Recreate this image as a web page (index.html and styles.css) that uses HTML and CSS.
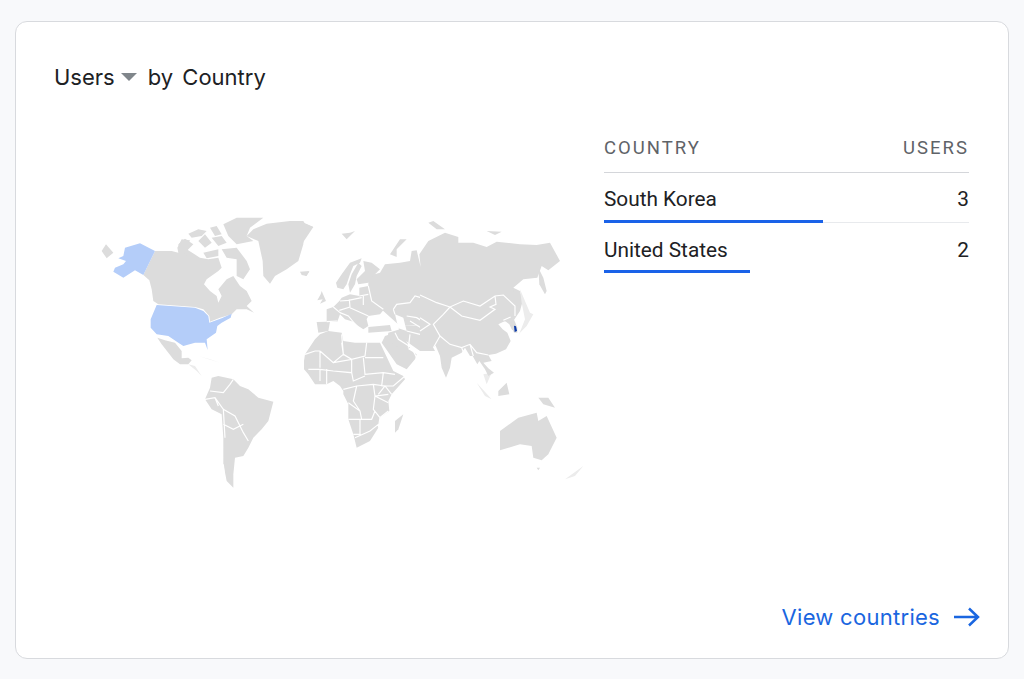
FILE: index.html
```html
<!DOCTYPE html>
<html lang="en">
<head>
<meta charset="utf-8">
<title>Users by Country</title>
<link rel="stylesheet" href="styles.css">
</head>
<body>
<main class="card">
  <h2 class="title"><span>Users</span><span class="caret"></span><span>by Country</span></h2>
  <div class="body">
    <svg class="map" viewBox="0 0 500 300" width="500" height="300" aria-label="World map">
      <!-- North America -->
      <g transform="scale(.33333)">
        <path class="land" d="M35 150L48 130L70 155L50 172Z"/>
        <path class="land" d="M195 150L245 150L265 155L262 140L275 115L300 118L290 145L330 170L355 175L385 170L395 200L385 210L350 235L342 250L360 270L380 285L385 305L395 285L385 265L410 235L430 225L450 255L470 270L485 300L470 315L492 335L470 325L440 325L425 340L390 350L360 362L358 345L340 325L315 318L205 310L190 300L185 265L178 238L160 222Z"/>
        <path class="land" d="M295 98L325 85L350 90L335 105L305 110ZM265 130L285 113L310 130L290 150L300 168L270 150ZM325 120L345 100L365 125L345 140ZM360 80L380 75L395 100L375 105ZM365 110L395 105L410 125L385 135ZM400 70L440 50L520 50L480 80L470 105L490 120L440 130L415 105ZM395 145L440 140L470 180L480 205L460 235L440 225L440 175L410 170ZM340 155L385 145L385 165L350 172ZM630 212L658 210L650 225L635 222Z"/>
        <path class="land" d="M490 85L530 68L600 60L640 60L645 68L670 78L640 95L640 130L625 180L590 205L555 225L540 248L520 225L518 180L505 120L470 105Z"/>
        <path class="us" d="M105 140L150 127L195 150L160 222L135 208L100 230L70 212L75 200L100 190L108 180L85 172L100 165Z"/>
      </g>
      <g transform="translate(50 100) scale(.33333)">
        <path class="us" d="M50 12L165 20L190 30L205 45L208 65L245 52L275 38L272 50L245 65L232 75L228 95L200 115L203 147L195 125L165 125L130 135L115 125L85 105L50 100L32 80L32 55Z"/>
        <path class="land" d="M52 110L75 118L105 125L125 150L125 172L145 170L155 178L145 190L120 190L100 175L85 155L65 130Z"/>
        <path class="pale" d="M145 190L165 195L185 225L170 210ZM175 165L240 185L210 175Z"/>
      </g>
      <!-- South America, islands, Australia -->
      <g transform="translate(100 140) scale(.33333)">
        <path class="land" d="M65 110L85 105L130 115L150 135L175 145L205 170L250 182L235 240L215 265L190 290L175 320L160 345L135 350L130 400L130 440L110 420L100 370L100 290L95 220L65 205L45 175L60 140Z"/>
        <path class="border" d="M60 150L100 155L120 130L130 115M45 175L75 170L100 205L135 225L160 275L175 300M100 250L130 265L160 250M100 205L105 290M75 170L85 195M100 370L105 420"/>
        <path class="pale" d="M860 125L905 175L885 165ZM1125 415L1180 375L1155 405ZM880 100L905 95L890 130Z"/>
        <path class="land" d="M925 150L950 125L958 160L925 165ZM1045 170L1075 170L1095 200L1060 190Z"/>
        <path class="land" d="M930 270L985 230L1040 215L1045 240L1070 225L1100 290L1075 340L1055 358L1030 350L1025 315L990 310L930 328Z"/>
        <path class="land" d="M1040 380L1050 380L1045 388Z"/>
      </g>
      <!-- Africa and Arabia -->
      <g transform="translate(210 130) scale(.33333)">
        <path class="land" d="M12 90L15 70L45 25L60 10L85 0L125 5L130 30L165 35L200 35L240 35L280 120L310 135L315 145L275 190L265 210L268 240L240 260L235 290L210 330L170 350L160 310L145 265L145 220L130 190L130 180L120 165L100 150L80 160L45 160L25 130L12 115Z"/>
        <path class="land" d="M310 250L295 295L285 305L285 270Z"/>
        <path class="land" d="M245 35L255 15L270 10L300 30L325 55L350 70L345 85L320 115L290 100Z"/>
        <path class="border" d="M60 60L100 95L130 70L125 10M45 60L60 60M15 70L45 60M125 35L130 70L155 85L195 75L200 35M195 80L250 80M190 80L195 130L250 125L285 130M100 95L155 85L155 125L100 120M155 125L160 150L195 135M100 120L150 125M25 115L60 115L100 120M60 115L60 150M80 115L80 160M60 60L60 110M130 175L170 165L220 160L255 165M170 165L160 210L180 240M220 160L225 195L265 190M225 195L220 235L240 260M145 215L180 240L185 265L145 265M145 265L180 265L180 310L160 310M180 265L215 265L225 240M165 320L210 300L235 280M250 125L245 165L280 165L315 135M235 190L255 165L275 190M225 195L265 215M265 240L240 260L235 290"/>
      </g>
      <!-- Russia and northern Asia -->
      <g transform="translate(210 10) scale(.33333)">
        <path class="land" d="M385 35L400 30L435 55L410 55ZM125 68L150 65L165 60L140 85ZM560 60L605 62L585 72ZM0 30L40 48L12 90L0 120ZM270 130L300 85L320 85L290 115L290 138Z"/>
        <path class="land" d="M205 195L240 185L255 160L300 155L330 150L335 120L350 118L362 168L358 130L385 90L435 65L475 78L475 95L520 95L560 108L590 92L660 100L710 102L750 95L780 150L745 178L725 165L712 200L670 205L640 230L660 240L668 270L660 300L640 330L450 340L300 345L250 300L215 280L190 275L205 250Z"/>
        <path class="land" d="M715 170L730 200L740 240L735 250L718 220Z"/>
        <path class="land" d="M295 345L340 345L440 330L420 390L400 410L405 420L360 420L325 395L300 375Z"/>
      </g>
      <!-- Europe -->
      <g transform="translate(210 50) scale(.33333)">
        <path class="land" d="M2 65L28 62L18 75ZM65 120L78 150L60 158L68 145L52 148L62 130Z"/>
        <path class="land" d="M108 95L125 70L150 35L185 22L180 35L160 45L150 70L140 100L130 115L112 110Z"/>
        <path class="land" d="M155 70L175 35L185 45L170 75L165 100L150 125L145 100Z"/>
        <path class="land" d="M190 30L215 35L240 55L220 75L205 95L175 100L170 85L195 60Z"/>
        <path class="land" d="M50 213L80 212L80 175L100 168L118 150L125 140L150 130L178 135L178 110L205 105L215 120L260 170L250 178L240 190L205 195L200 205L205 225L190 235L175 225L160 212L135 205L120 190L112 212L90 212L85 240L55 245Z"/>
        <path class="land" d="M205 228L270 222L275 240L205 245ZM265 245L300 235L330 290L310 300L280 280L262 265Z"/>
        <path class="sea" d="M285 190L310 200L320 240L295 232Z"/>
        <path class="border" d="M280 175L290 160L330 155L345 135L380 145M280 175L285 190M320 195L350 200L390 225M330 210L370 235M320 240L360 250L385 270M285 245L295 265L335 290L350 320M330 250L325 290M118 178L150 168M120 150L145 148L185 140M148 145L150 168M190 135L190 162M150 170L205 195M80 212L112 210M120 185L100 168M178 135L205 130M205 105L215 150L250 175M120 185L145 195L170 225"/>
      </g>
      <!-- East Asia -->
      <g transform="translate(330 80) scale(.33333)">
        <path class="land" d="M0 0L280 0L278 25L292 70L285 95L272 108L280 130L284 152L275 145L268 130L255 120L235 130L248 145L262 155L272 180L258 205L228 218L205 222L215 240L190 245L205 262L222 275L205 285L195 265L178 240L172 250L158 225L150 225L135 200L125 215L95 230L90 260L78 290L65 260L60 225L45 190L30 200L0 205Z"/>
        <path class="pale" d="M300 25L330 95L340 100L320 135L300 155L295 165L305 140L315 115L305 65Z"/>
        <path class="land" d="M272 112L283 118L292 140L292 155L282 155L274 135Z"/>
        <path class="kr" d="M282 134L288 136L291 150L284 153Z"/>
        <path class="border" d="M0 42L50 65L90 78L130 60L180 75L225 45L250 42L285 75L285 105M90 78L125 105L180 118L225 85L210 78L228 70L225 45M90 78L70 100L40 130L60 165L90 190L125 200L150 190L170 215L205 222M60 165L40 200M125 200L135 225L155 250M150 190L160 225M0 110L30 130L0 150M272 108L250 118"/>
      </g>
    </svg>
    <table class="table">
      <thead>
        <tr><th class="name">COUNTRY</th><th class="num">USERS</th></tr>
      </thead>
      <tbody>
        <tr>
          <td class="name">South Korea<div class="bar bar-a"></div></td>
          <td class="num">3</td>
        </tr>
        <tr>
          <td class="name">United States<div class="bar bar-b"></div></td>
          <td class="num">2</td>
        </tr>
      </tbody>
    </table>
  </div>
  <a class="link" href="#">View countries
    <svg class="arrow" viewBox="0 0 26 20" width="26" height="20"><path d="M0 10H24M15 1.500L24 10L15 18.500"/></svg>
  </a>
</main>
</body>
</html>
```
FILE: styles.css
```css
* { box-sizing: border-box; }
html, body { height: 100%; }
body {
  margin: 0;
  padding: 21px 15px 20px;
  background: #f8f9fb;
  overflow: hidden;
}
.card {
  width: 994px;
  height: 638px;
  display: flex;
  flex-direction: column;
  background: #fff;
  border: 1px solid #d8dade;
  border-radius: 12px;
  padding: 41px 28px 27px 38px;
}
.title {
  margin: 0;
  display: flex;
  align-items: center;
  height: 28px;
  font: 400 22px/28px Inter, sans-serif;
  word-spacing: 3px;
  color: #202124;
}
.caret {
  width: 0;
  height: 0;
  margin: 0 11px 0 6px;
  border-left: 8px solid transparent;
  border-right: 8px solid transparent;
  border-top: 8px solid #80868b;
}
.body {
  flex: 1;
  display: flex;
  align-items: flex-start;
  padding-top: 40px;
}
.map {
  flex: none;
  margin: 70px 0 0 36px;
  filter: blur(.3px);
}
.table {
  margin-left: 14px;
  width: 365px;
  border-collapse: collapse;
  font-family: Roboto, sans-serif;
  font-size: 20.800px;
  color: #202124;
}
.table th {
  height: 41px;
  padding: 0 0 7px;
  font-size: 18.500px;
  font-weight: 400;
  letter-spacing: 2px;
  color: #5f6368;
  border-bottom: 1px solid #d4d6da;
}
.table td {
  height: 50px;
  padding: 3px 0 0;
  border-bottom: 1px solid #e8eaed;
  position: relative;
}
.table tbody tr:last-child td { border-bottom: 0; padding-top: 5px; }
.name { text-align: left; }
.num { text-align: right; }
.bar {
  position: absolute;
  left: 0;
  bottom: -1px;
  height: 3px;
  background: #1a62e8;
}
.bar-a { width: 219px; }
.bar-b { width: 146px; }
.link {
  align-self: flex-end;
  display: flex;
  align-items: center;
  gap: 14px;
  font: 400 22px/28px Inter, sans-serif;
  letter-spacing: .28px;
  color: #1a66e0;
  text-decoration: none;
}
.arrow { flex: none; }
.arrow path { fill: none; stroke: #1a66e0; stroke-width: 2.500; }
.land { fill: #dcdcdc; }
.pale { fill: #ececec; }
.sea { fill: #fff; }
.us { fill: #b4cdf9; }
.kr { fill: #0b3aa8; }
.border { fill: none; stroke: #fff; stroke-width: 3.500; }
```
